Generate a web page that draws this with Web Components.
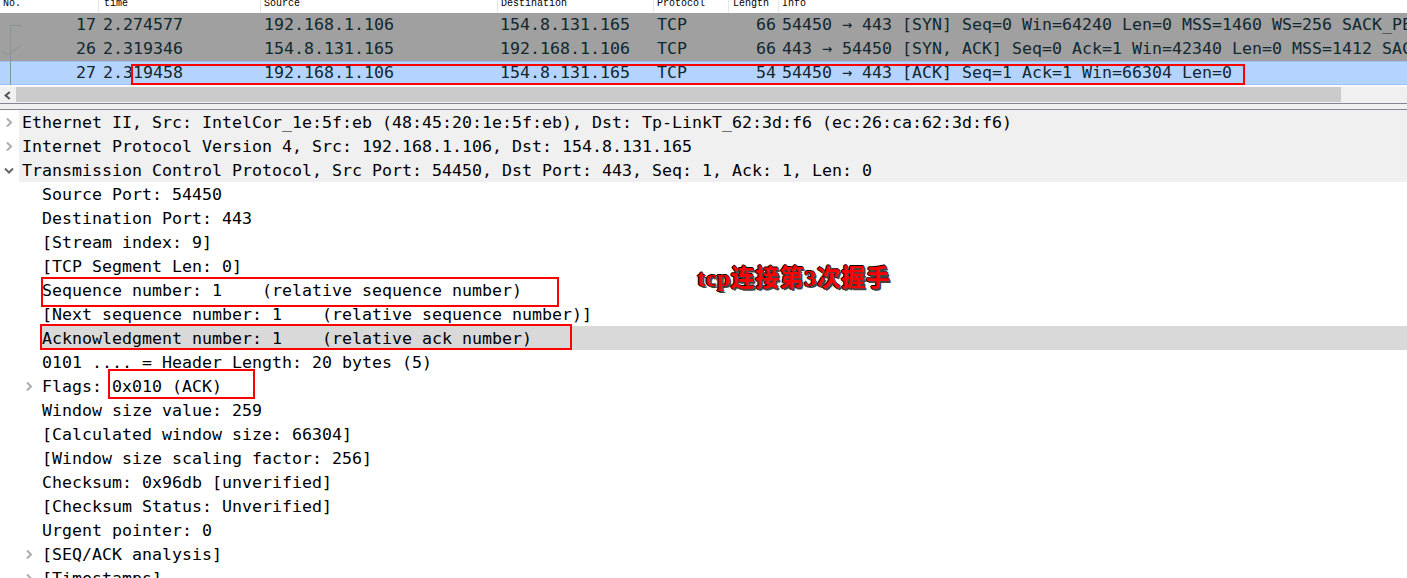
<!DOCTYPE html>
<html>
<head>
<meta charset="utf-8">
<title>Wireshark capture</title>
<style>
  html, body { margin: 0; padding: 0; background: #fff; }
  body { width: 1407px; height: 578px; overflow: hidden; position: relative; font-family: "DejaVu Sans Mono", monospace; }
</style>
</head>
<body>
<ws-list-header></ws-list-header>
<ws-packet-row kind="grey" no="17" time="2.274577" src="192.168.1.106" dst="154.8.131.165" proto="TCP" len="66" info="54450 → 443 [SYN] Seq=0 Win=64240 Len=0 MSS=1460 WS=256 SACK_PERM=1"></ws-packet-row>
<ws-packet-row kind="grey" no="26" time="2.319346" src="154.8.131.165" dst="192.168.1.106" proto="TCP" len="66" info="443 → 54450 [SYN, ACK] Seq=0 Ack=1 Win=42340 Len=0 MSS=1412 SACK_PERM=1 WS=512"></ws-packet-row>
<ws-packet-row kind="sel" no="27" time="2.319458" src="192.168.1.106" dst="154.8.131.165" proto="TCP" len="54" info="54450 → 443 [ACK] Seq=1 Ack=1 Win=66304 Len=0"></ws-packet-row>
<ws-scrollbar></ws-scrollbar>
<ws-tree>
  <ws-tree-row level="0" toggle="closed" shade>Ethernet II, Src: IntelCor_1e:5f:eb (48:45:20:1e:5f:eb), Dst: Tp-LinkT_62:3d:f6 (ec:26:ca:62:3d:f6)</ws-tree-row>
  <ws-tree-row level="0" toggle="closed" shade>Internet Protocol Version 4, Src: 192.168.1.106, Dst: 154.8.131.165</ws-tree-row>
  <ws-tree-row level="0" toggle="open" shade>Transmission Control Protocol, Src Port: 54450, Dst Port: 443, Seq: 1, Ack: 1, Len: 0</ws-tree-row>
  <ws-tree-row level="1">Source Port: 54450</ws-tree-row>
  <ws-tree-row level="1">Destination Port: 443</ws-tree-row>
  <ws-tree-row level="1">[Stream index: 9]</ws-tree-row>
  <ws-tree-row level="1">[TCP Segment Len: 0]</ws-tree-row>
  <ws-tree-row level="1">Sequence number: 1    (relative sequence number)</ws-tree-row>
  <ws-tree-row level="1">[Next sequence number: 1    (relative sequence number)]</ws-tree-row>
  <ws-tree-row level="1" current>Acknowledgment number: 1    (relative ack number)</ws-tree-row>
  <ws-tree-row level="1">0101 .... = Header Length: 20 bytes (5)</ws-tree-row>
  <ws-tree-row level="1" toggle="closed">Flags: 0x010 (ACK)</ws-tree-row>
  <ws-tree-row level="1">Window size value: 259</ws-tree-row>
  <ws-tree-row level="1">[Calculated window size: 66304]</ws-tree-row>
  <ws-tree-row level="1">[Window size scaling factor: 256]</ws-tree-row>
  <ws-tree-row level="1">Checksum: 0x96db [unverified]</ws-tree-row>
  <ws-tree-row level="1">[Checksum Status: Unverified]</ws-tree-row>
  <ws-tree-row level="1">Urgent pointer: 0</ws-tree-row>
  <ws-tree-row level="1" toggle="closed">[SEQ/ACK analysis]</ws-tree-row>
  <ws-tree-row level="1" toggle="closed">[Timestamps]</ws-tree-row>
</ws-tree>
<ws-red-box style="left:131px;top:64px;width:1114px;height:21px"></ws-red-box>
<ws-red-box style="left:41px;top:277px;width:518px;height:30px"></ws-red-box>
<ws-red-box style="left:40px;top:324px;width:532px;height:26px"></ws-red-box>
<ws-red-box style="left:108px;top:369px;width:147px;height:30px"></ws-red-box>
<ws-note style="left:697px;top:263px">tcp连接第3次握手</ws-note>
<script>
const MONO = '"DejaVu Sans Mono", "Liberation Mono", monospace';

class WsListHeader extends HTMLElement {
  constructor() {
    super();
    this.attachShadow({ mode: 'open' });
    this.shadowRoot.innerHTML = `
      <style>
        :host {
          display: grid;
          grid-template-columns: 99px 162px 237px 156px 75px 50px 1fr;
          height: 13px;
          overflow: hidden;
          background: #fff;
          font: 10px/12px "Liberation Mono", monospace;
          color: #000;
        }
        span {
          border-right: 1px solid #e6e6e6;
          padding-left: 3px;
          margin-top: -2px;
          height: 15px;
          overflow: hidden;
          white-space: nowrap;
        }
        span:last-child { border-right: 0; }
        span.time { padding-left: 5px; }
        span.len { padding-left: 4px; }
      </style>
      <span>No.</span><span class="time">time</span><span>Source</span><span>Destination</span><span>Protocol</span><span class="len">Length</span><span>Info</span>
    `;
  }
}

class WsPacketRow extends HTMLElement {
  constructor() {
    super();
    this.attachShadow({ mode: 'open' });
  }
  connectedCallback() {
    const a = n => this.getAttribute(n) || '';
    this.shadowRoot.innerHTML = `
      <style>
        :host {
          display: grid;
          grid-template-columns: 98px 162px 237px 156px 75px 50px 1fr;
          height: 24px;
          position: relative;
          overflow: hidden;
          font: 16.61px/24px ${MONO};
          color: #12272e;
          white-space: pre;
          background: #a0a0a0;
        }
        :host([kind="sel"]) { background: #b5d3ff; box-shadow: inset 0 1px #9cc2f7, inset 0 -1px #9cc2f7; }
        div { overflow: hidden; padding-left: 4px; }
        .num { text-align: right; padding: 0 2px 0 0; }
        .time { padding-left: 5px; }
        .dst { padding-left: 3px; }
        svg { position: absolute; left: 0; top: 0; }
      </style>
      <div class="num">${a('no')}</div>
      <div class="time">${a('time')}</div>
      <div>${a('src')}</div>
      <div class="dst">${a('dst')}</div>
      <div>${a('proto')}</div>
      <div class="num">${a('len')}</div>
      <div>${a('info')}</div>
      ${this.relationMark(a('no'))}
    `;
  }
  // the conversation bracket Wireshark draws in the No. column
  relationMark(no) {
    const stroke = '#84969c';
    if (no === '17') return `<svg width="30" height="24" fill="none" stroke="${stroke}"><path d="M21 12.5H10.5V24"/></svg>`;
    if (no === '26') return `<svg width="30" height="24" fill="none" stroke="${stroke}"><path d="M10.5 0V24"/><path stroke="#8e9496" d="M1 14L8 17.5L21 8"/></svg>`;
    return `<svg width="30" height="24" fill="none" stroke="${stroke}"><path d="M10.5 0V24"/></svg>`;
  }
}

class WsScrollbar extends HTMLElement {
  constructor() {
    super();
    this.attachShadow({ mode: 'open' });
    this.shadowRoot.innerHTML = `
      <style>
        :host {
          display: flex;
          height: 18px;
          background: #f0f0f0;
          box-sizing: border-box;
          border-top: 2px solid #fafafa;
        }
        .arrow { width: 16px; display: flex; align-items: center; justify-content: center; padding-right: 2px; box-sizing: border-box; }
        .thumb { width: 1325px; height: 15px; background: #cbcbcb; }
      </style>
      <div class="arrow"><svg width="7" height="9" viewBox="0 0 7 9" fill="none" stroke="#555" stroke-width="2"><path d="M5.8 1L1.6 4.5L5.8 8"/></svg></div>
      <div class="thumb"></div>
    `;
  }
}

class WsTree extends HTMLElement {
  constructor() {
    super();
    this.attachShadow({ mode: 'open' });
    this.shadowRoot.innerHTML = `
      <style>
        :host {
          display: block;
          background: #fff;
        }
        .splitter {
          height: 5px;
          background: #f0f0f0;
          border-top: 1px solid #85858f;
          border-bottom: 1px solid #85858f;
        }
      </style>
      <div class="splitter"></div>
      <slot></slot>
    `;
  }
}

class WsTreeRow extends HTMLElement {
  constructor() {
    super();
    this.attachShadow({ mode: 'open' });
  }
  connectedCallback() {
    const level = Number(this.getAttribute('level') || 0);
    const toggle = this.getAttribute('toggle');
    let icon = '';
    if (toggle === 'closed') icon = '<path d="M3 1.5L7 5.5L3 9.5"/>';
    if (toggle === 'open') icon = '<path stroke="#666" d="M1 3.5L5 7.5L9 3.5"/>';
    this.shadowRoot.innerHTML = `
      <style>
        :host {
          display: flex;
          height: 24px;
          font: 16.61px/26px ${MONO};
          color: #000;
          white-space: pre;
          padding-left: ${level * 20}px;
        }
        .gutter { width: 20px; flex: none; display: flex; align-items: center; padding-left: 4px; box-sizing: border-box; }
        .text { flex: 1; height: 24px; overflow: hidden; padding-left: 2px; }
        :host([shade]) .text { background: #f0f0f0; margin-left: -1px; padding-left: 3px; }
        :host([current]) .text { background: #d9d9d9; }
      </style>
      <div class="gutter"><svg width="11" height="11" fill="none" stroke="#adadad" stroke-width="2">${icon}</svg></div>
      <div class="text"><slot></slot></div>
    `;
  }
}

class WsRedBox extends HTMLElement {
  constructor() {
    super();
    this.attachShadow({ mode: 'open' });
    this.shadowRoot.innerHTML = `
      <style>
        :host {
          display: block;
          position: absolute;
          box-sizing: border-box;
          border: 2px solid #f00;
        }
      </style>
    `;
  }
}

class WsNote extends HTMLElement {
  constructor() {
    super();
    this.attachShadow({ mode: 'open' });
    this.shadowRoot.innerHTML = `
      <style>
        :host {
          display: block;
          position: absolute;
          font: bold 24px/30px "Liberation Serif", "Noto Sans CJK SC", serif;
          letter-spacing: 0.5px;
          color: #f00;
          white-space: nowrap;
          text-shadow: 2px 2px 0 #444, 1px 0 0 #000, -1px 0 0 #000, 0 1px 0 #000, 0 -1px 0 #000;
        }
      </style>
      <slot></slot>
    `;
  }
}

customElements.define('ws-list-header', WsListHeader);
customElements.define('ws-packet-row', WsPacketRow);
customElements.define('ws-scrollbar', WsScrollbar);
customElements.define('ws-tree', WsTree);
customElements.define('ws-tree-row', WsTreeRow);
customElements.define('ws-red-box', WsRedBox);
customElements.define('ws-note', WsNote);
</script>
</body>
</html>
